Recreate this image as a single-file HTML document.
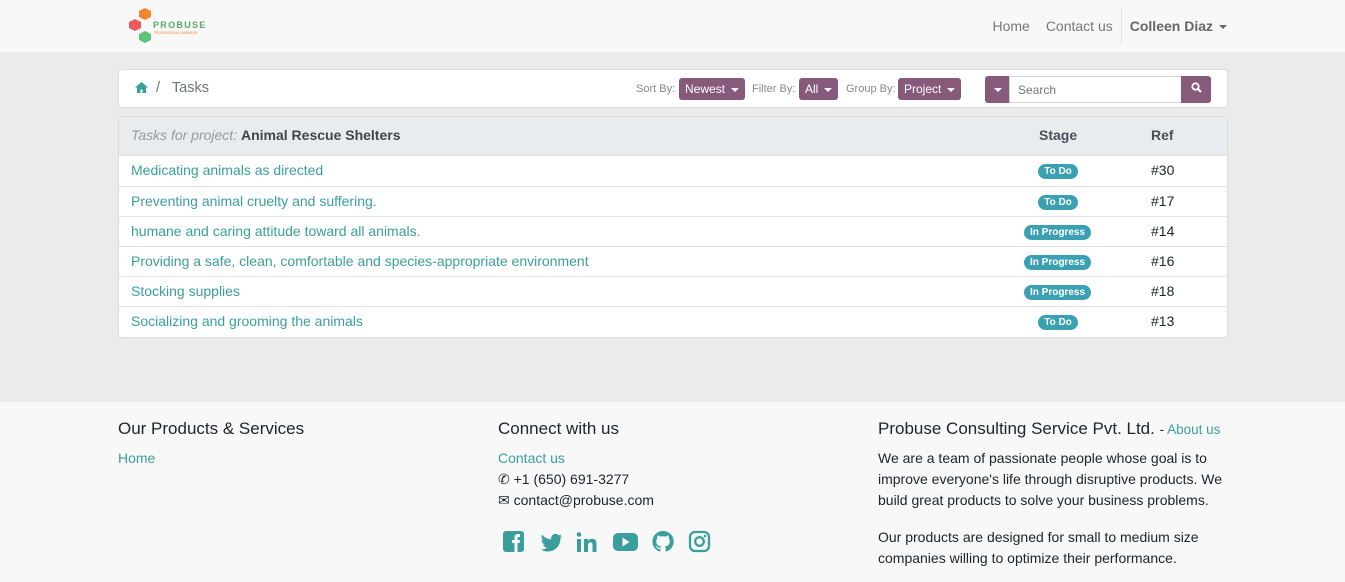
<!DOCTYPE html>
<html><head><meta charset="utf-8">
<style>
*{box-sizing:border-box;margin:0;padding:0}
body{width:1345px;height:582px;overflow:hidden;font-family:"Liberation Sans",sans-serif;font-size:14px;color:#212529;background:#ebebeb}
a{color:#3a9f9c;text-decoration:none}
.nav{height:52px;background:#f8f8f8;position:relative}
.nav .r{position:absolute;right:118px;top:0;height:52px;display:flex;align-items:center;font-size:14px;color:#777}
.nav .r span{margin-left:16px}
.nav .sep{width:1px;height:38px;background:#e2e2e2;margin-left:8px}
.nav .u{font-weight:bold;color:#666;margin-left:8px!important}
.car{display:inline-block;border-left:4px solid transparent;border-right:4px solid transparent;border-top:4px solid currentColor;vertical-align:middle;margin-left:6px}
.bc{position:absolute;left:118px;top:69px;width:1110px;height:39px;background:#fff;border:1px solid #dcdcdc;border-radius:4px}
.bc .t{position:absolute;left:16px;top:10px;font-size:14.5px;color:#6c757d}
.lbl{position:absolute;top:13px;font-size:11px;color:#888}
.btn{position:absolute;top:8px;height:22px;background:#875a7b;color:#fff;font-size:12px;border-radius:3px;padding:3px 6px;line-height:16px}
.tbl{position:absolute;left:118px;top:116px;width:1110px;height:222px;background:#fff;border:1px solid #dcdcdc;border-radius:4px;overflow:hidden}
.hd{height:39px;background:#e9ecef;border-bottom:1px solid #dee2e6;position:relative;font-size:14px}
.row{height:30px;border-top:1px solid #dee2e6;position:relative;font-size:14px}
.row a{position:absolute;left:12px;top:6px}
.bdg{position:absolute;left:919px;width:40px;text-align:center;top:8px;height:15px;line-height:15px;border-radius:8px;background:#3ba1b2;color:#fff;font-size:10px;font-weight:bold}
.bdg.w{left:905px;width:67px}
.ref{position:absolute;left:1032px;top:6px}
.foot{position:absolute;top:402px;left:0;width:1345px;height:180px;background:#f8f8f8}
.foot h5{font-size:17px;font-weight:normal;position:absolute;top:17px;white-space:nowrap}
.foot p{position:absolute;font-size:14px;line-height:21px}
</style></head><body>
<div class="nav">
<svg style="position:absolute;left:128px;top:7px" width="80" height="38" viewBox="0 0 80 38">
<polygon points="17,1 23,4 23,10 17,13 11,10 11,4" fill="#f0852d"/>
<polygon points="7,12 13,15 13,21 7,24 1,21 1,15" fill="#e95a5a"/>
<polygon points="17,24 23,27 23,33 17,36 11,33 11,27" fill="#5cc47a"/>
<text x="25" y="21" font-family="Liberation Sans" font-size="9" font-weight="bold" fill="#5aa86a" letter-spacing="1.3">PROBUSE</text>
<text x="26" y="27" font-family="Liberation Sans" font-size="3.3" fill="#f08030">PROFESSIONAL BUSINESS</text>
</svg>
<div class="r"><span>Home</span><span>Contact us</span><div class="sep"></div><span class="u">Colleen Diaz<i class="car"></i></span></div>
</div>
<div class="bc">
<span class="t"><svg width="13" height="11" viewBox="0 0 13 11" style="vertical-align:-1px"><path d="M6.5 0L0 5.5h2V11h3.5V7.5h2V11H11V5.5h2z" fill="#3a9f9c"/></svg>&nbsp;&nbsp;/&nbsp;&nbsp; Tasks</span>
<span class="lbl" style="left:517px">Sort By:</span><span class="btn" style="left:560px">Newest<i class="car"></i></span>
<span class="lbl" style="left:633px">Filter By:</span><span class="btn" style="left:680px">All<i class="car"></i></span>
<span class="lbl" style="left:727px">Group By:</span><span class="btn" style="left:779px">Project<i class="car"></i></span>
<span class="btn" style="left:866px;top:6px;height:27px;width:25px;border-radius:3px 0 0 3px;padding:5px 0;text-align:center"><i class="car" style="margin:0"></i></span>
<div style="position:absolute;left:890px;top:6px;width:173px;height:27px;border:1px solid #ced4da;font-size:12px;color:#777;padding:6px 8px">Search</div>
<span class="btn" style="left:1062px;top:6px;height:27px;width:30px;border-radius:0 3px 3px 0;padding:5px 0;text-align:center"><svg width="11" height="11" viewBox="0 0 11 11"><circle cx="4.5" cy="4.5" r="3.2" stroke="#fff" stroke-width="1.8" fill="none"/><path d="M7 7l3 3" stroke="#fff" stroke-width="2"/></svg></span>
</div>
<div class="tbl">
<div class="hd"><span style="position:absolute;left:12px;top:10px"><i style="color:#999">Tasks for project:</i> <b style="color:#444">Animal Rescue Shelters</b></span>
<b style="position:absolute;left:920px;top:10px;color:#495057">Stage</b><b style="position:absolute;left:1032px;top:10px;color:#495057">Ref</b></div>
<div class="row" style="border-top:0"><a>Medicating animals as directed</a><span class="bdg">To Do</span><span class="ref">#30</span></div>
<div class="row"><a>Preventing animal cruelty and suffering.</a><span class="bdg">To Do</span><span class="ref">#17</span></div>
<div class="row"><a>humane and caring attitude toward all animals.</a><span class="bdg w">In Progress</span><span class="ref">#14</span></div>
<div class="row"><a>Providing a safe, clean, comfortable and species-appropriate environment</a><span class="bdg w">In Progress</span><span class="ref">#16</span></div>
<div class="row"><a>Stocking supplies</a><span class="bdg w">In Progress</span><span class="ref">#18</span></div>
<div class="row"><a>Socializing and grooming the animals</a><span class="bdg">To Do</span><span class="ref">#13</span></div>
</div>
<div class="foot">
<h5 style="left:118px">Our Products &amp; Services</h5>
<p style="left:118px;top:46px"><a>Home</a></p>
<h5 style="left:498px">Connect with us</h5>
<p style="left:498px;top:46px"><a>Contact us</a><br>&#9990; +1 (650) 691-3277<br>&#9993; contact@probuse.com</p>
<svg style="position:absolute;left:503px;top:128px" width="210" height="24" viewBox="0 0 210 24" fill="#3a9f9c">
<rect x="0" y="1" width="21" height="21" rx="3"/><path d="M11.5 22V13h-2.5v-3h2.5V7.5c0-2.5 1.5-3.5 3.5-3.5h2v3h-1.5c-.8 0-1 .4-1 1V10h2.5l-.4 3h-2.1v9z" fill="#f8f8f8"/>
<path d="M59 6c-.8.4-1.6.6-2.5.7.9-.5 1.6-1.4 1.900-2.4-.8.5-1.8.9-2.7 1-.8-.9-2-1.4-3.2-1.4-2.4 0-4.4 2-4.4 4.4 0 .3 0 .7.1 1-3.700-.2-6.900-2-9.100-4.600-.4.7-.6 1.400-.6 2.200 0 1.500.8 2.900 2 3.700-.7 0-1.400-.2-2-.6 0 2.200 1.500 4 3.500 4.400-.6.2-1.300.2-2 .1.6 1.800 2.200 3 4.100 3.100-1.500 1.200-3.400 1.900-5.500 1.900H38c2 1.200 4.300 2 6.800 2 8.100 0 12.600-6.700 12.600-12.600v-.6C58 7.5 58.600 6.800 59 6z"/>
<rect x="74" y="9" width="4" height="13"/><circle cx="76" cy="4.5" r="2.3"/><path d="M81 9h4v2c.7-1.3 2.2-2.3 4.2-2.3 3.3 0 4.3 2 4.3 5V22h-4v-7c0-1.6-.4-2.6-1.9-2.6-1.6 0-2.6 1-2.6 2.8V22h-4z"/>
<rect x="110" y="3" width="25" height="18" rx="5"/><path d="M119.5 7.5v9l7-4.5z" fill="#f8f8f8"/>
<path d="M160 1a10.5 10.5 0 0 0-3.3 20.5c.5.1.7-.2.7-.5v-2c-2.9.6-3.5-1.2-3.5-1.2-.5-1.2-1.2-1.5-1.2-1.5-.9-.6.1-.6.1-.6 1 .1 1.6 1.1 1.6 1.1.9 1.6 2.5 1.1 3.1.9.1-.7.4-1.1.6-1.4-2.3-.3-4.8-1.2-4.8-5.2 0-1.1.4-2.1 1.1-2.8-.1-.3-.5-1.3.1-2.8 0 0 .9-.3 2.9 1.1a10 10 0 0 1 5.3 0c2-1.4 2.9-1.1 2.9-1.1.6 1.5.2 2.5.1 2.8.7.7 1.1 1.7 1.1 2.8 0 4-2.5 4.9-4.8 5.2.4.3.7 1 .7 1.9V21c0 .3.2.6.7.5A10.5 10.5 0 0 0 160 1z"/>
<rect x="187" y="2" width="19" height="19" rx="5" fill="none" stroke="#3a9f9c" stroke-width="2.3"/><circle cx="196.5" cy="11.5" r="4.3" fill="none" stroke="#3a9f9c" stroke-width="2.3"/><circle cx="202" cy="6" r="1.3"/>
</svg>
<h5 style="left:878px">Probuse Consulting Service Pvt. Ltd. <span style="font-size:13.5px">- <a>About us</a></span></h5>
<p style="left:878px;top:46px;width:350px">We are a team of passionate people whose goal is to improve everyone's life through disruptive products. We build great products to solve your business problems.</p>
<p style="left:878px;top:125px;width:350px">Our products are designed for small to medium size companies willing to optimize their performance.</p>
</div>
</body></html>
